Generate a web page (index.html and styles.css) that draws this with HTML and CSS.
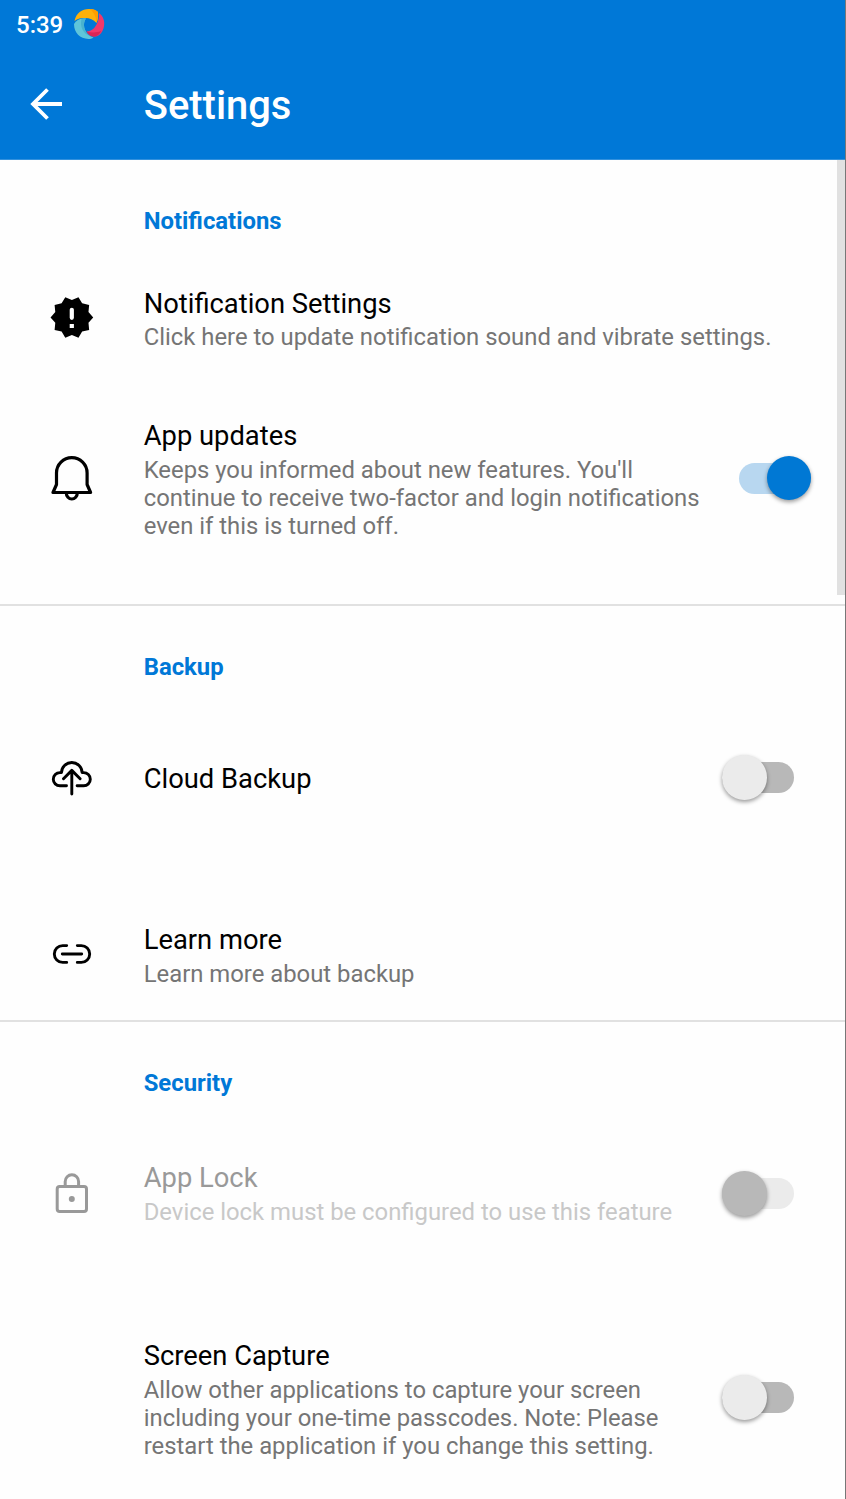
FILE: index.html
```html
<!DOCTYPE html>
<html lang="en">
<head>
<meta charset="utf-8">
<title>Settings</title>
<link rel="stylesheet" href="styles.css">
</head>
<body>
<div class="screen">
  <header class="header">
    <div class="status">
      <span class="clock">5:39</span>
      <svg class="app-logo" width="32" height="32" viewBox="0 0 32 32">
        <path fill="#fdb10b" d="M1.500 13C3 5 9 1 16 1c4 0 7 1 9 3 .3 4 0 7.500-1.500 11-3-3.500-7-5-11-5-4.500 0-8 .5-11 3z"/>
        <path fill="#ff9d00" d="M17 1c4 0 6.500 1.500 8 3 .3 4 0 7.500-1.500 11 0-5-2-10-6.500-14z"/>
        <path fill="#f0386b" d="M26 5c4 3 6 8 5 13-1 6-4 10-9 10.500-4 .2-7-2-8.500-5 5.500-.5 8.500-3.500 10.500-8 1.500-3 2.200-6.500 2-10.500z"/>
        <path fill="#d92556" d="M28 23c-2 4-4 5.500-7 5.500-3.500 0-6-2-7.500-5 5 1 9 1.500 14.500-.5z"/>
        <path fill="#5fc5da" d="M1 16c2-4 6-6 12-5.500-2.500 3.500-2.500 8-.7 12 1.500 3.500 4.700 6 8.200 7-1.500 1-3.500 1.500-5 1.500C7 30.500 1 25 1 16z"/>
        <path fill="#49b3cf" d="M8.500 11c1.500-.5 3-.6 4.500-.5-2.500 3.500-2.500 8-.7 12 1 2.500 2.700 4.500 4.700 5.500C10.500 26 6.500 19 8.500 11z"/>
      </svg>
    </div>
    <div class="toolbar">
      <svg class="back" width="34" height="34" viewBox="0 0 34 34" fill="none" stroke="#fff" stroke-width="3.800"><path d="M33 17H4M18.500 2.500L4 17l14.500 14.500"/></svg>
      <h1 class="title">Settings</h1>
    </div>
  </header>
  <main class="list">
    <section class="group">
      <h2 class="heading">Notifications</h2>
      <div class="row row-short">
        <svg class="icon" width="48" height="48" viewBox="0 0 48 48"><path transform="translate(.6 .2) scale(1.940)" d="M23 12l-2.440-2.780.34-3.680-3.610-.82-1.890-3.180L12 3 8.600 1.540 6.710 4.720l-3.610.81.34 3.680L1 12l2.440 2.780-.34 3.690 3.610.82 1.890 3.180L12 21l3.400 1.460 1.890-3.180 3.610-.82-.34-3.680z"/><path stroke="#fff" stroke-width="4.200" stroke-linecap="round" d="M23.800 15.800v8"/><path fill="#fff" d="M21.700 30h4.200v4h-4.200z"/></svg>
        <div class="text"><div class="name">Notification Settings</div><div class="summary">Click here to update notification sound and vibrate settings.</div></div>
      </div>
      <div class="row row-tall">
        <svg class="icon" width="48" height="48" viewBox="0 0 48 48" fill="none" stroke="#000" stroke-width="3.200" stroke-linejoin="round"><path d="M5 38.500l3.500-8V19a15.300 15.300 0 0 1 30.600 0v11.500l3.500 8zM18.300 39a5.500 6 0 0 0 11 0"/></svg>
        <div class="text"><div class="name">App updates</div><div class="summary">Keeps you informed about new features. You'll<br>continue to receive two-factor and login notifications<br>even if this is turned off.</div></div>
        <div class="switch on"><span class="thumb"></span></div>
      </div>
    </section>
    <section class="group">
      <h2 class="heading">Backup</h2>
      <div class="row row-mid">
        <svg class="icon" width="48" height="48" viewBox="0 0 48 48" fill="none" stroke="#000" stroke-width="2.900" stroke-linecap="round" stroke-linejoin="round"><path d="M18.500 31.800h-6.600a6.600 6.600 0 0 1 0-13.200h1.600a10.300 10.100 0 0 1 20.600 0h1.600a6.600 6.600 0 0 1 0 13.200h-6.600M23.800 40V16.500M15.500 24.700l8.300-8.300 8.300 8.300"/></svg>
        <div class="text"><div class="name">Cloud Backup</div></div>
        <div class="switch off"><span class="thumb"></span></div>
      </div>
      <div class="row row-link">
        <svg class="icon" width="48" height="48" viewBox="0 0 48 48" fill="none" stroke="#000" stroke-width="2.900" stroke-linecap="round"><path d="M18.700 14.600h-4a8.400 8.400 0 0 0 0 16.800h4M29.300 14.600h4a8.400 8.400 0 0 1 0 16.800h-4M14.300 23h19.400"/></svg>
        <div class="text"><div class="name">Learn more</div><div class="summary">Learn more about backup</div></div>
      </div>
    </section>
    <section class="group">
      <h2 class="heading">Security</h2>
      <div class="row row-mid disabled">
        <svg class="icon" width="48" height="48" viewBox="0 0 48 48" fill="none" stroke="#999" stroke-width="3"><rect x="9.200" y="16.500" width="29.300" height="25" rx="2.500"/><path d="M17.200 16v-4.500a6.700 6.700 0 0 1 13.400 0V16"/><circle cx="23.800" cy="29" r="3" fill="#999" stroke="none"/></svg>
        <div class="text"><div class="name">App Lock</div><div class="summary">Device lock must be configured to use this feature</div></div>
        <div class="switch off"><span class="thumb"></span></div>
      </div>
      <div class="row row-tall row-spaced">
        <div class="text"><div class="name">Screen Capture</div><div class="summary">Allow other applications to capture your screen<br>including your one-time passcodes. Note: Please<br>restart the application if you change this setting.</div></div>
        <div class="switch off"><span class="thumb"></span></div>
      </div>
    </section>
    <div class="scrollbar"></div>
  </main>
  <div class="edge"></div>
</div>
</body>
</html>
```
FILE: styles.css
```css
* { box-sizing: border-box; }
body { margin: 0; background: #fff; font-family: Roboto, "Liberation Sans", sans-serif; }
.screen { position: relative; width: 846px; height: 1499px; overflow: hidden; background: #fefefe; }
.header { height: 160px; background: #0078d7; border-bottom: 1px solid #3391dd; color: #fff; }
.status { height: 48px; display: flex; align-items: center; padding-left: 16px; }
.clock { width: 57px; font-size: 24px; font-weight: 500; line-height: 28px; padding-top: 2px; }
.toolbar { height: 111px; display: flex; align-items: center; padding: 0 0 0 29px; }
.title { margin: 5px 0 0 80.800px; font-size: 39.900px; line-height: 48px; font-weight: 500; }
.list { position: relative; }
.group { border-bottom: 2px solid #e1e1e1; }
.heading { margin: 0; height: 100px; padding: 45px 0 0 143.700px; font-size: 23.850px; line-height: 32px; font-weight: 700; color: #0078d7; }
.row { display: flex; align-items: center; padding-left: 143.700px; }
.row-short { height: 116px; }
.row-tall { height: 204px; }
.group:first-child .row-tall { margin-bottom: 24px; }
.row-mid { height: 144px; }
.row-link { height: 130px; margin-top: 40px; }
.row-spaced { margin-top: 30px; }
.icon { flex: none; margin: 0 48px 0 -96px; }
.text { flex: 1; white-space: nowrap; padding-top: 2px; }
.row-tall .text { padding-top: 4px; }
.name { font-size: 27.350px; line-height: 32px; color: #000; }
.summary { font-size: 23.850px; line-height: 28px; margin-top: 4px; color: #757575; }
.row-short .text { padding-top: 3px; }
.row-short .summary { margin-top: 3px; }
.disabled .text { padding-top: 0; }
.disabled .name { color: #999; }
.disabled .summary { color: #c8c8c8; }
.switch { flex: none; display: flex; align-items: center; height: 31px; width: 72px; border-radius: 16px; }
.switch.on { margin-right: 35px; background: #b8d7f0; justify-content: flex-end; }
.switch.off { margin: 0 52px 1px 0; background: #b8b8b8; }
.row-mid .switch { margin-bottom: 1px; }
.thumb { width: 44.500px; height: 44.500px; border-radius: 50%; box-shadow: 0 2px 4px rgba(0,0,0,.4); background: #ebebeb; }
.on .thumb { background: #0078d4; }
.disabled .switch { background: #ebebeb; }
.disabled .thumb { background: #b8b8b8; }
.scrollbar { position: absolute; top: 0; right: 1px; width: 8px; height: 435px; background: #e1e1e1; }
.edge { position: absolute; top: 0; right: 0; width: 1px; height: 100%; background: #777; }
```
